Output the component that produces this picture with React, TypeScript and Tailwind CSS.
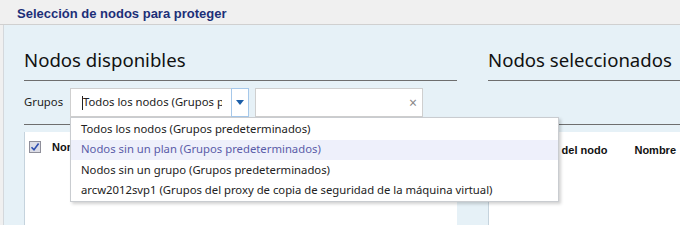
import React from "react";

const sans = { fontFamily: '"Noto Sans", "Open Sans", sans-serif' };
const arial = { fontFamily: '"Liberation Sans", Arial, sans-serif' };

function Check() {
  return (
    <div className="w-[12px] h-[12px] border border-[#8f8f9a] bg-[#dcdde6] flex items-center justify-center">
      <svg width="10" height="10" viewBox="0 0 10 10">
        <path d="M1.5 5.2 L4 7.8 L8.6 1.6" stroke="#2f4fb0" strokeWidth="1.6" fill="none" />
      </svg>
    </div>
  );
}

export default function App() {
  const items = [
    "Todos los nodos (Grupos predeterminados)",
    "Nodos sin un plan (Grupos predeterminados)",
    "Nodos sin un grupo (Grupos predeterminados)",
    "arcw2012svp1 (Grupos del proxy de copia de seguridad de la máquina virtual)",
  ];
  return (
    <div className="w-[680px] h-[225px] overflow-hidden bg-[#f0f0f0] flex flex-col" style={sans}>
      <div className="h-[25px] shrink-0 border-b border-[#d0d0d0] pl-[17px] flex items-center">
        <span className="text-[13px] font-bold text-[#1c2f78] leading-none pt-[3px]" style={arial}>
          Selección de nodos para proteger
        </span>
      </div>
      <div className="flex flex-1">
        <div className="w-[4px] shrink-0 border-r border-[#d4d8dc] bg-[#f0f0f0]" />
        <div className="flex-1 bg-[#e6f1f7] pl-[20px] flex gap-[31px]">
          {/* left column */}
          <div className="w-[433px] shrink-0 flex flex-col">
            <div className="h-[56px] shrink-0 border-b border-[#6e6e6e] flex items-end pb-[6px]">
              <span className="text-[18.6px] leading-[28px] text-[#111]">Nodos disponibles</span>
            </div>
            <div className="h-[44px] shrink-0 flex items-center border-b border-[#6e6e6e]">
              <span className="text-[11.3px] text-[#222] w-[46px]">Grupos</span>
              <div className="relative">
                <div className="w-[179px] h-[29px] bg-white border border-[#cfcfcf] flex">
                  <div className="flex-1 flex items-center pl-[11px] overflow-hidden whitespace-nowrap">
                    <span className="w-px h-[14px] bg-[#222] shrink-0" />
                    <span className="text-[11.3px] text-[#222] w-[139px] overflow-hidden shrink-0">Todos los nodos (Grupos predeterminados)</span>
                  </div>
                  <div className="w-[18px] shrink-0 border border-[#a6c8ea] -my-px -mr-px flex items-center justify-center">
                    <svg width="8" height="5" viewBox="0 0 8 5">
                      <path d="M0 0 H8 L4 5 Z" fill="#1c5ea8" />
                    </svg>
                  </div>
                </div>
                <div className="absolute left-0 top-[29px] w-[489px] h-[85px] bg-white border border-[#c9ccd0] shadow-[2px_2px_3px_rgba(0,0,0,0.18)] z-10 flex flex-col pt-[1px]">
                  {items.map((t, i) => (
                    <div
                      key={i}
                      className={`h-[20.5px] shrink-0 flex items-center pl-[10px] text-[11.3px] whitespace-nowrap ${
                        i === 1 ? "bg-[#eef0fb] text-[#5a5ca8]" : "text-[#222]"
                      }`}
                    >
                      {t}
                    </div>
                  ))}
                </div>
              </div>
              <div className="ml-[6px] w-[168px] h-[29px] bg-white border border-[#cfcfcf] flex items-center justify-end pr-[5px]">
                <span className="text-[14px] text-[#888] leading-none">×</span>
              </div>
            </div>
            <div className="mt-[7px] flex-1 bg-white border-l border-[#c5d3dd] pl-[4px] pt-[9px] flex items-start gap-[11px]">
              <Check />
              <span className="text-[11px] font-bold text-[#111] leading-[12px] whitespace-nowrap" style={arial}>Nombre del nodo</span>
            </div>
          </div>
          {/* right column */}
          <div className="flex-1 flex flex-col min-w-0">
            <div className="h-[56px] shrink-0 border-b border-[#6e6e6e] flex items-end pb-[6px]">
              <span className="text-[18.6px] leading-[28px] text-[#111] whitespace-nowrap">Nodos seleccionados</span>
            </div>
            <div className="h-[44px] shrink-0 border-b border-[#6e6e6e]" />
            <div className="mt-[7px] flex-1 bg-white border-l border-[#c5d3dd] pt-[10px] pl-[28px] flex gap-[27px] whitespace-nowrap">
              <span className="text-[11px] font-bold text-[#111]" style={arial}>Nombre del nodo</span>
              <span className="text-[11px] font-bold text-[#111]" style={arial}>Nombre</span>
            </div>
          </div>
        </div>
      </div>
    </div>
  );
}
